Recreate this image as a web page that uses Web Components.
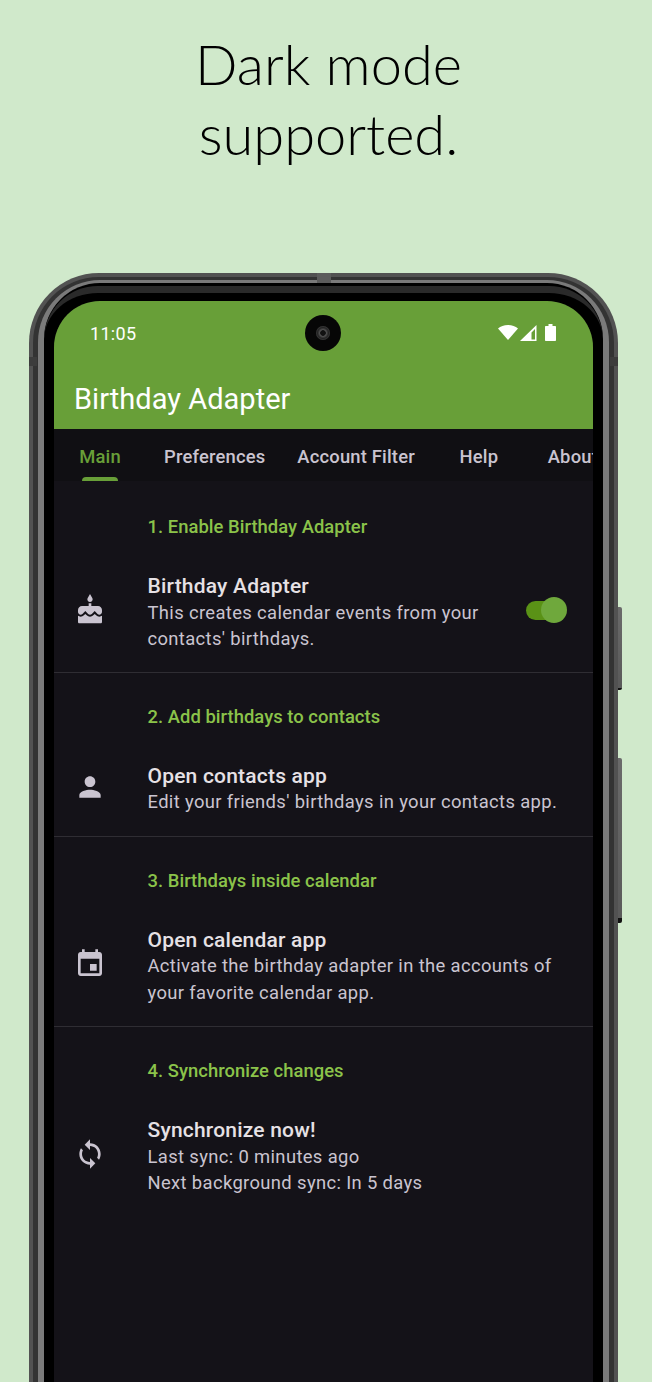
<!DOCTYPE html>
<html><head><meta charset="utf-8">
<style>
html,body{margin:0;padding:0;height:1382px;overflow:hidden;background:#d0e9cb}
body{font-family:Roboto,sans-serif;display:flex;flex-direction:column}
</style></head><body>
<shot-title>Dark mode<br>supported.</shot-title>
<phone-frame>
  <status-bar time="11:05"></status-bar>
  <app-bar>Birthday Adapter</app-bar>
  <tab-bar>
    <tab-item active>Main</tab-item>
    <tab-item>Preferences</tab-item>
    <tab-item>Account Filter</tab-item>
    <tab-item>Help</tab-item>
    <tab-item style="margin-left:-2px">About</tab-item>
  </tab-bar>
  <pref-section heading="1. Enable Birthday Adapter" first>
    <pref-item title="Birthday Adapter" icon="cake">
      <div>This creates calendar events from your<br>contacts' birthdays.</div>
      <md-switch slot="end"></md-switch>
    </pref-item>
  </pref-section>
  <pref-section heading="2. Add birthdays to contacts">
    <pref-item title="Open contacts app" icon="person">
      <div>Edit your friends' birthdays in your contacts app.</div>
    </pref-item>
  </pref-section>
  <pref-section heading="3. Birthdays inside calendar">
    <pref-item title="Open calendar app" icon="event">
      <div>Activate the birthday adapter in the accounts of<br>your favorite calendar app.</div>
    </pref-item>
  </pref-section>
  <pref-section heading="4. Synchronize changes" last>
    <pref-item title="Synchronize now!" icon="sync">
      <div>Last sync: 0 minutes ago<br>Next background sync: In 5 days</div>
    </pref-item>
  </pref-section>
</phone-frame>
<script>
const ICONS={
cake:'M12 6c1.11 0 2-.9 2-2 0-.38-.1-.73-.29-1.03L12 0l-1.71 2.97c-.19.3-.29.65-.29 1.03 0 1.1.9 2 2 2zm4.6 9.99l-1.07-1.07-1.08 1.07c-1.3 1.3-3.58 1.31-4.89 0l-1.07-1.07-1.09 1.07C6.75 16.64 5.88 17 4.96 17c-.73 0-1.4-.23-1.96-.61V21c0 .55.45 1 1 1h16c.55 0 1-.45 1-1v-4.61c-.56.38-1.23.61-1.96.61-.92 0-1.79-.36-2.44-1.01zM18 9h-5V7h-2v2H6c-1.66 0-3 1.34-3 3v1.54c0 1.08.88 1.96 1.96 1.96.52 0 1.02-.2 1.38-.57l2.14-2.13 2.13 2.13c.74.74 2.03.74 2.77 0l2.14-2.13 2.13 2.13c.37.37.86.57 1.38.57 1.08 0 1.96-.88 1.96-1.96V12C21 10.34 19.66 9 18 9z',
person:'M12 12c2.21 0 4-1.79 4-4s-1.79-4-4-4-4 1.79-4 4 1.79 4 4 4zm0 2c-2.67 0-8 1.34-8 4v2h16v-2c0-2.66-5.33-4-8-4z',
event:'M17 12h-5v5h5v-5zM16 1v2H8V1H6v2H5c-1.11 0-1.99.9-1.99 2L3 19c0 1.1.89 2 2 2h14c1.1 0 2-.9 2-2V5c0-1.1-.9-2-2-2h-1V1h-2zm3 18H5V8h14v11z',
sync:'M12 4V1L8 5l4 4V6c3.31 0 6 2.69 6 6 0 1.01-.25 1.97-.7 2.8l1.46 1.46C19.54 15.03 20 13.57 20 12c0-4.42-3.58-8-8-8zm0 14c-3.31 0-6-2.69-6-6 0-1.01.25-1.97.7-2.8L5.24 7.74C4.46 8.97 4 10.43 4 12c0 4.42 3.58 8 8 8v3l4-4-4-4v3z'};
function def(name,html,init){
  customElements.define(name,class extends HTMLElement{
    constructor(){super();this.attachShadow({mode:'open'}).innerHTML=html;}
    connectedCallback(){init&&init(this,this.shadowRoot);}
  });
}
def('shot-title',`<style>:host{display:block;flex:none;height:273px;box-sizing:border-box;padding:29px 0 0 5px;text-align:center;font:300 56px/70px Lato,sans-serif;color:#000}</style><slot></slot>`);
def('phone-frame',`<style>
:host{display:block;position:relative;width:589px;margin-left:29px;height:1200px;flex:none}
.l1{background:#525252;border-radius:70px 70px 0 0;padding:4px 4px 0;height:100%;box-sizing:border-box}
.l2{background:#333;border-radius:66px 66px 0 0;padding:3px 5px 0;height:100%;box-sizing:border-box}
.l3{background:#7a7a7a;border-radius:62px 62px 0 0;padding:3px 6px 0;height:100%;box-sizing:border-box}
.l4{background:#000;border-radius:56px 56px 0 0;padding:18px 10px 0;height:100%;box-sizing:border-box;position:relative}
.band{position:absolute;left:0;right:0;top:3px;height:90px;box-sizing:border-box;border-top:7px solid #2a2a2a;border-radius:54px 54px 0 0}
.screen{position:relative;background:#141218;border-radius:46px 46px 0 0;overflow:hidden;height:100%;display:flex;flex-direction:column}
.btn{position:absolute;left:100%;width:4px;background:linear-gradient(#6a6a6a,#5a5a5a 97%,#111 97%);border-radius:0 2px 2px 0}
.b1{top:334px;height:83px}.b2{top:485px;height:165px}
.mark{position:absolute;background:#3c3c3c}
.m1{left:288px;top:0;width:14px;height:10px;background:#5c5c5c}
.m2{left:0;top:84px;width:8px;height:9px}.m3{right:0;top:84px;width:8px;height:9px}
</style>
<div class="l1"><div class="l2"><div class="l3"><div class="l4"><div class="band"></div><div class="screen"><slot></slot></div></div></div></div></div>
<div class="mark m1"></div><div class="mark m2"></div><div class="mark m3"></div>
<div class="btn b1"></div><div class="btn b2"></div>`);
def('status-bar',`<style>
:host{display:flex;align-items:center;justify-content:space-between;height:64px;background:#689f38;color:#fff;box-sizing:border-box;padding:1px 37px 0 36px;position:relative;font:400 18px/24px Roboto,sans-serif;flex:none}
.time{letter-spacing:.3px}
.cam{position:absolute;left:251px;top:14px;width:36px;height:36px;border-radius:50%;background:#060606;display:flex;align-items:center;justify-content:center}
.cam i{display:block;width:14px;height:14px;border-radius:50%;background:radial-gradient(circle,#111 25%,#555 32%,#222 55%,#3a3a3a 70%,#0a0a0a 100%)}
svg{display:block;margin-top:-1px}
</style><span class="time" id="t"></span><div class="cam"><i></i></div>
<svg width="60" height="20" viewBox="0 0 60 20" style="margin-right:-1px">
<path fill="#fff" d="M1 5.5C3.6 3.4 6.9 2 11 2s7.4 1.4 10 3.5L11 17z"/>
<path fill="#fff" fill-rule="evenodd" d="M39.5 2v16H23zM38 6 34.5 9.6V16.5H38z"/>
<path fill="#fff" d="M51.5 1h4v2h2.5c.6 0 1 .4 1 1v13c0 .6-.4 1-1 1h-9c-.6 0-1-.4-1-1V4c0-.6.4-1 1-1h2.5z"/>
</svg>`,(h,s)=>{s.getElementById('t').textContent=h.getAttribute('time')});
def('app-bar',`<style>:host{display:flex;align-items:center;height:64px;box-sizing:border-box;background:#689f38;color:#fff;padding:4px 0 0 20px;font:400 29px/36px Roboto,sans-serif;letter-spacing:.03px;flex:none}</style><slot></slot>`);
def('tab-bar',`<style>:host{display:flex;height:52px;background:#100f13;overflow:hidden;flex:none;padding-left:0}
.row{display:flex;margin-left:-2px}</style><div class="row"><slot></slot></div>`);
def('tab-item',`<style>:host{display:flex;flex:none;position:relative;justify-content:center;align-items:center;min-width:96px;padding:3px 16px 0;box-sizing:border-box;font:500 18.4px/24px Roboto,sans-serif;letter-spacing:.18px;color:#cac4d0;height:52px}
:host([active]){color:#689f38}
:host([active])::after{content:"";position:absolute;bottom:0;left:50%;width:36px;margin-left:-18px;height:4px;border-radius:4px 4px 0 0;background:#689f38}
</style><slot></slot>`);
def('pref-section',`<style>:host{display:block;box-sizing:border-box;padding:32px 0 20px;border-bottom:1px solid #2f2d33;flex:none}
:host([first]){padding:34px 0 19px}:host([last]){border-bottom:0}
.h{padding-left:93.5px;font:500 18.4px/24px Roboto,sans-serif;letter-spacing:.04px;color:#8bc34a;margin-bottom:34px}
</style><div class="h" id="h"></div><slot></slot>`,(h,s)=>{s.getElementById('h').textContent=h.getAttribute('heading')});
def('pref-item',`<style>:host{display:flex;align-items:center;padding:0 26px 0 20px}
svg{width:32px;height:32px;fill:#cac4d0;flex:none;margin:-5px 41.5px 0 0;display:block}
.t{flex:1;min-width:0}
.title{font:500 21px/26.5px Roboto,sans-serif;letter-spacing:.2px;color:#e6e1e5}
.s{font:400 18.4px/26.5px Roboto,sans-serif;color:#cac4d0;letter-spacing:.36px;white-space:nowrap}
::slotted(md-switch){margin-top:-5px}
</style><svg viewBox="0 0 24 24"><path id="p"/></svg><div class="t"><div class="title" id="tt"></div><div class="s"><slot></slot></div></div><slot name="end"></slot>`,
(h,s)=>{s.getElementById('tt').textContent=h.getAttribute('title');s.getElementById('p').setAttribute('d',ICONS[h.getAttribute('icon')])});
def('md-switch',`<style>:host{display:block;position:relative;width:41px;height:26px;flex:none}
.track{position:absolute;left:0;top:3.5px;width:32px;height:19px;border-radius:10px;background:#5a9216}
.thumb{position:absolute;left:15px;top:0;width:26px;height:26px;border-radius:50%;background:#6fa83c}
</style><div class="track"></div><div class="thumb"></div>`);
</script>
</body></html>
